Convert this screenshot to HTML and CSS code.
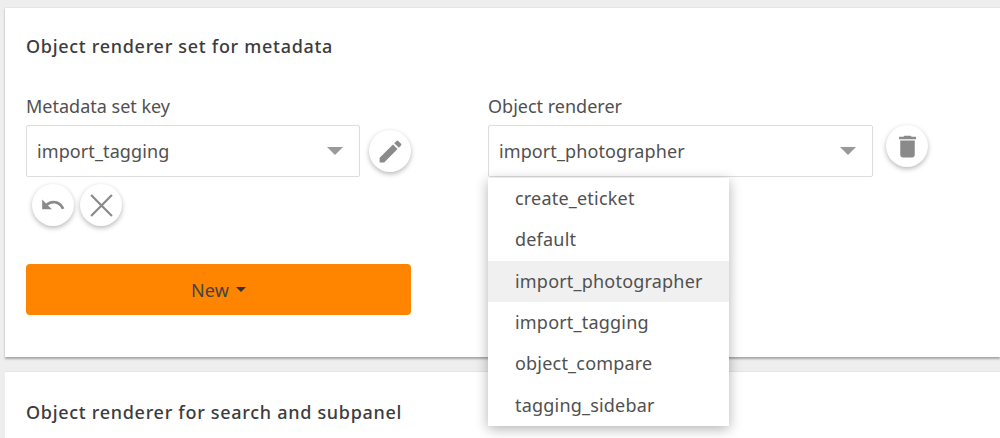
FILE: index.html
```html
<!DOCTYPE html>
<html lang="en">
<head>
<meta charset="utf-8">
<title>Object renderers</title>
<link rel="stylesheet" href="styles.css">
</head>
<body>
<main class="page">
  <section class="card card-first">
    <h2 class="title">Object renderer set for metadata</h2>
    <div class="form">
      <div class="col col-left">
        <label class="label">Metadata set key</label>
        <div class="row">
          <div class="select select-left">
            <span>import_tagging</span>
            <i class="caret"></i>
          </div>
          <button class="fab fab-edit" aria-label="Edit">
            <svg viewBox="0 0 24 24" class="icon icon-large"><path d="M3 17.25V21h3.75L17.81 9.94l-3.75-3.75L3 17.25zM20.71 7.04a1 1 0 0 0 0-1.41l-2.34-2.34a1 1 0 0 0-1.41 0l-1.83 1.83 3.75 3.75 1.83-1.83z"/></svg>
          </button>
        </div>
        <div class="actions">
          <button class="fab" aria-label="Undo">
            <svg viewBox="0 0 24 24" class="icon icon-undo"><path d="M12.5 8c-2.65 0-5.05.99-6.9 2.6L2 7v9h9l-3.62-3.62c1.39-1.16 3.16-1.88 5.12-1.88 3.54 0 6.55 2.31 7.6 5.5l2.37-.78C21.08 11.03 17.15 8 12.5 8z"/></svg>
          </button>
          <button class="fab" aria-label="Cancel">
            <svg viewBox="0 0 24 24" class="icon icon-x"><path d="M2 2 22 22M22 2 2 22"/></svg>
          </button>
        </div>
        <button class="new-btn"><span class="new-label">New</span><i class="caret-small"></i></button>
      </div>
      <div class="col col-right">
        <label class="label">Object renderer</label>
        <div class="row row-top">
          <div class="select select-right">
            <span>import_photographer</span>
            <i class="caret"></i>
          </div>
          <button class="fab fab-trash" aria-label="Delete">
            <svg viewBox="0 0 24 24" class="icon icon-large"><path d="M6 19a2 2 0 0 0 2 2h8a2 2 0 0 0 2-2V7H6v12zM19 4h-3.5l-1-1h-5l-1 1H5v2h14V4z"/></svg>
          </button>
        </div>
        <ul class="menu">
          <li>create_eticket</li>
          <li>default</li>
          <li class="active">import_photographer</li>
          <li>import_tagging</li>
          <li>object_compare</li>
          <li>tagging_sidebar</li>
        </ul>
      </div>
    </div>
  </section>
  <section class="card card-second">
    <h2 class="title">Object renderer for search and subpanel</h2>
  </section>
</main>
</body>
</html>
```

FILE: styles.css
```css
* { box-sizing: border-box; }
html, body { margin: 0; height: 100%; overflow: hidden; }
body {
  background: #eeeeee;
  font-family: "Noto Sans", "Liberation Sans", sans-serif;
  color: #505050;
  font-size: 18px;
  font-weight: 400;
  letter-spacing: .1px;
}
.page { padding: 7px 0 0 5px; width: 1000px; height: 438px; overflow: hidden; }
.card {
  background: #fff;
  padding: 0 21px;
  border-top: 1px solid #e4e4e4;
}
.card-first { height: 350px; box-shadow: 0 2px 2px rgba(0,0,0,.3); padding-top: 26px; }
.card-second { margin-top: 14px; height: 67px; padding-top: 28px; }
.title {
  margin: 0;
  font-size: 18px;
  line-height: 24px;
  font-weight: 500;
  letter-spacing: .7px;
  color: #3c3c3c;
}
.form { display: flex; margin-top: 36px; }
.col { display: flex; flex-direction: column; position: relative; }
.col-left { width: 385px; margin-right: 77px; }
.col-right { width: 460px; }
.label { line-height: 24px; height: 24px; letter-spacing: 0; }
.row { display: flex; align-items: center; margin-top: 7px; }
.row-top { align-items: flex-start; }
.select {
  height: 52px;
  border: 1px solid #ddd;
  border-radius: 2px;
  display: flex;
  align-items: center;
  justify-content: space-between;
  padding: 0 16px 0 10px;
  background: #fff;
}
.select-left { width: 334px; }
.select-right { width: 385px; }
.caret {
  width: 0; height: 0;
  border-left: 8px solid transparent;
  border-right: 8px solid transparent;
  border-top: 8px solid #999;
}
.fab {
  width: 42px; height: 42px;
  border-radius: 50%;
  border: 0;
  padding: 0;
  background: #fff;
  box-shadow: 0 2px 5px rgba(0,0,0,.28);
  display: flex;
  align-items: center;
  justify-content: center;
  flex: none;
}
.fab-edit { margin-left: 9px; }
.fab-trash { margin-left: 13px; }
.icon { width: 24px; height: 24px; fill: #8a8a8a; }
.icon-large { width: 29px; height: 29px; }
.icon-undo { width: 26px; height: 26px; }
.icon-x { width: 25px; height: 25px; fill: none; stroke: #8a8a8a; stroke-width: 2.1; }
.actions { display: flex; gap: 6px; margin: 7px 0 0 6px; }
.new-btn {
  margin-top: 38px;
  width: 385px;
  height: 51px;
  padding-bottom: 1px;
  border: 0;
  border-radius: 4px;
  background: #ff8400;
  color: #444;
  font: inherit;
  letter-spacing: inherit;
  display: flex;
  align-items: center;
  justify-content: center;
  gap: 7px;
}
.caret-small {
  width: 0; height: 0;
  border-left: 5px solid transparent;
  border-right: 5px solid transparent;
  border-top: 5px solid #333;
}
.menu {
  position: absolute;
  left: 0;
  top: 84px;
  z-index: 5;
  width: 241px;
  margin: 0;
  padding: 0;
  list-style: none;
  background: #fff;
  box-shadow: 0 3px 12px rgba(0,0,0,.3);
  letter-spacing: .2px;
}
.menu li {
  height: 41.33px;
  line-height: 41.33px;
  padding-left: 27px;
}
.menu li.active { background: #f0f0f0; }
```
